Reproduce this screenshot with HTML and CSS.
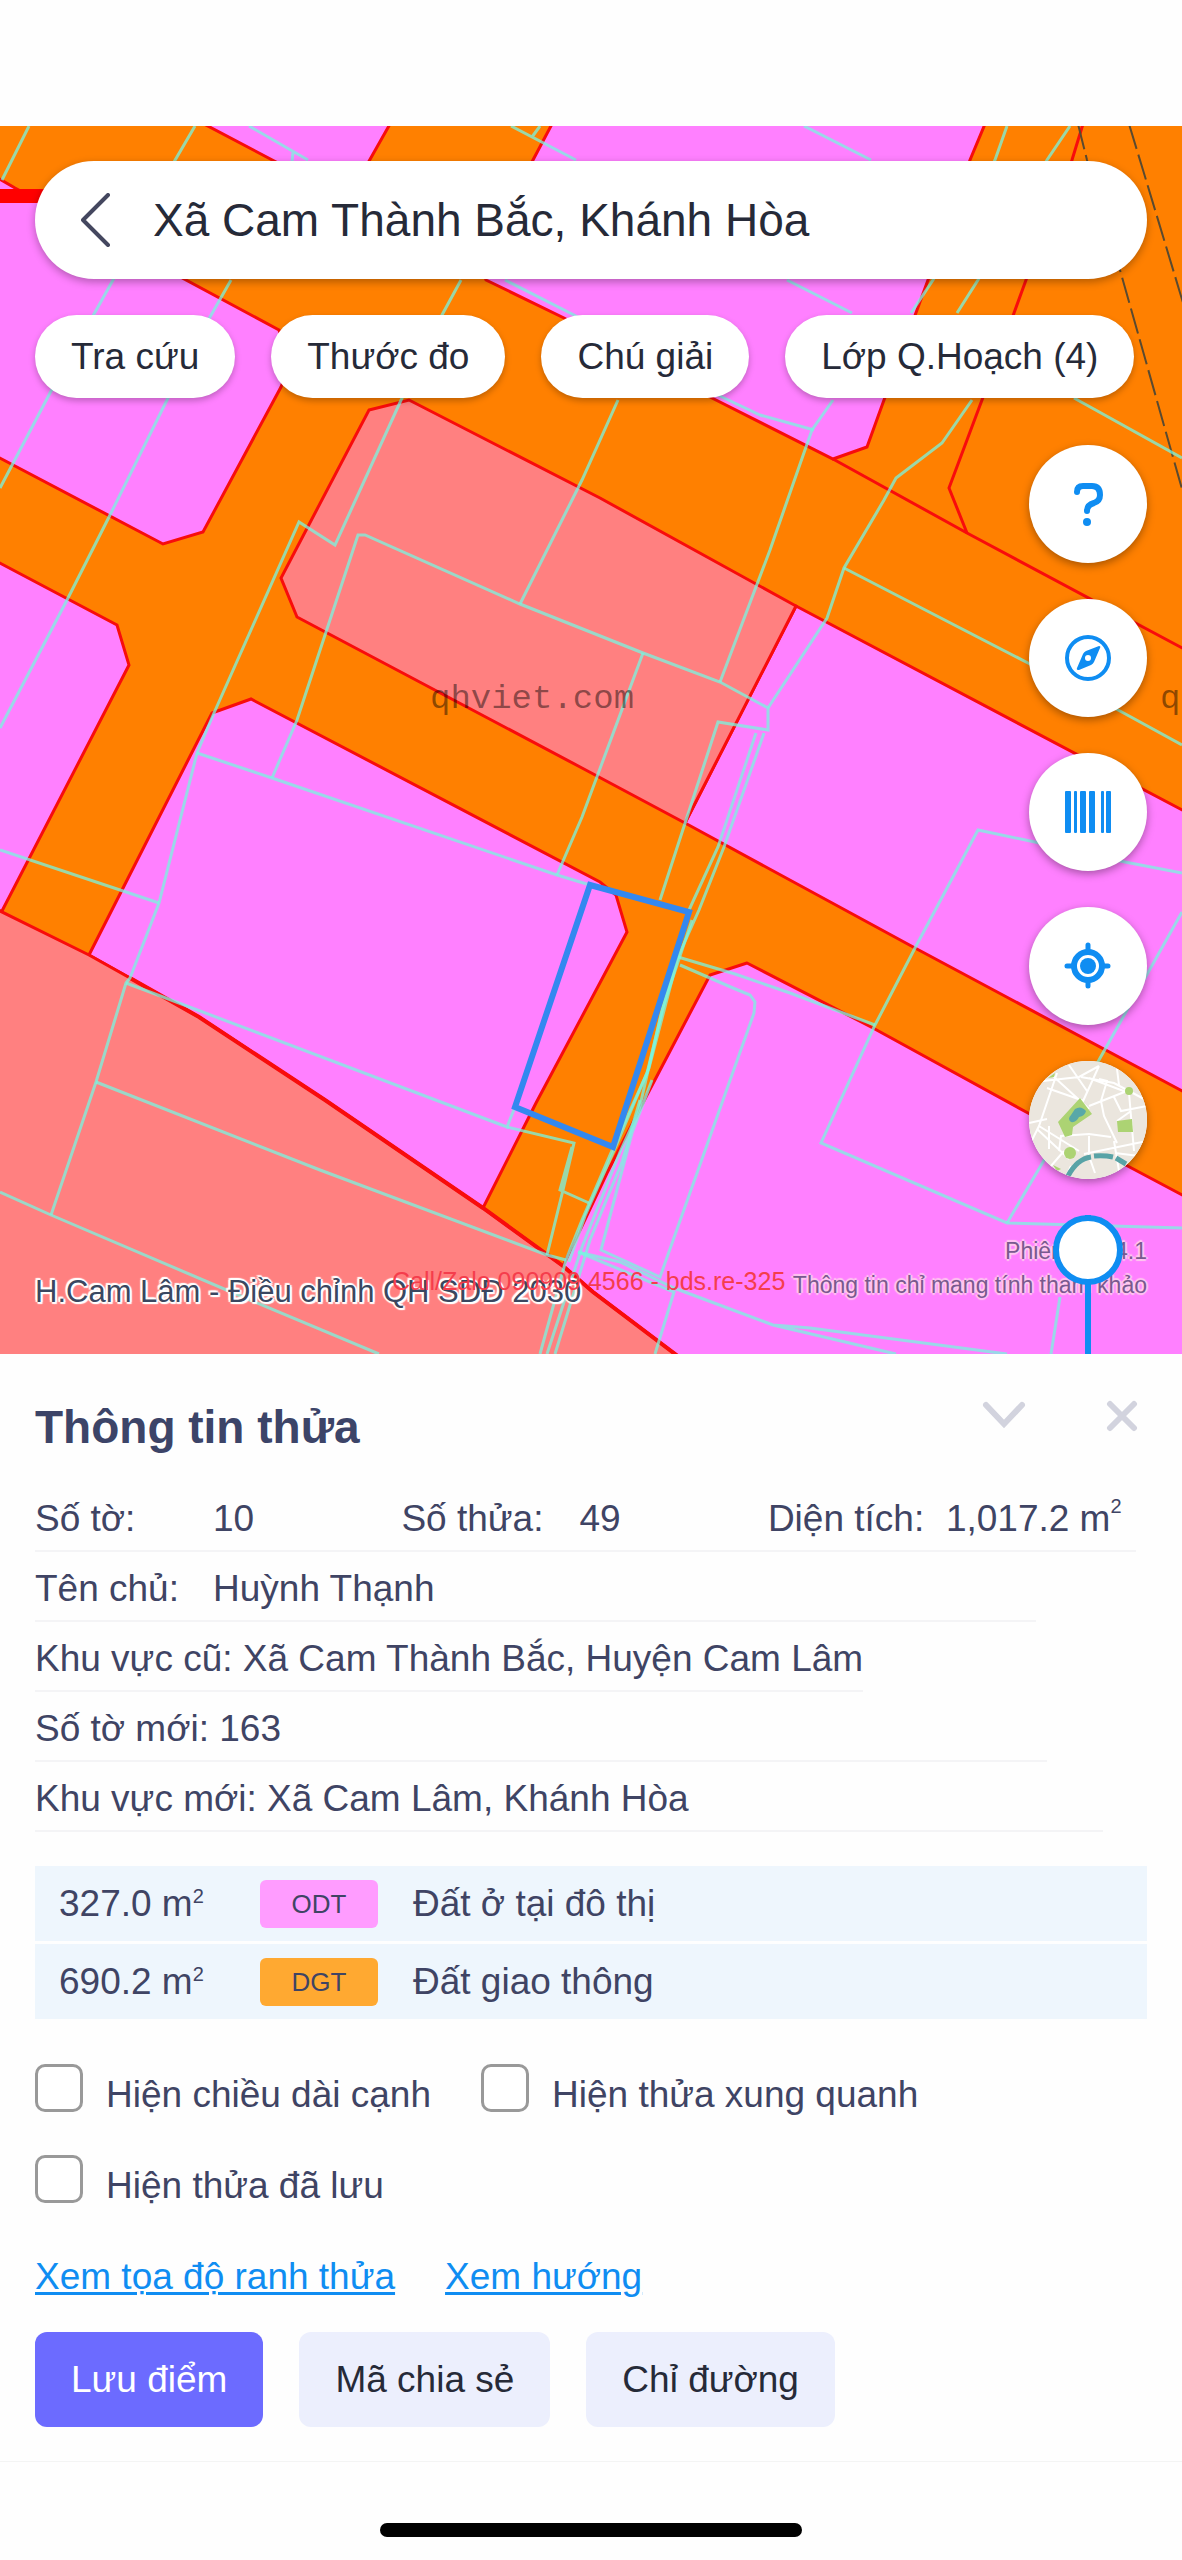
FILE: index.html
```html
<!DOCTYPE html>
<html lang="vi">
<head>
    <meta charset="UTF-8">
    <meta name="viewport" content="width=device-width, initial-scale=1.0">
    <title>Thông tin thửa</title>
    <link rel="stylesheet" href="styles.css">
</head>
<body>
    <main class="map">
        <svg class="map-canvas" viewBox="0 126 1182 1228" preserveAspectRatio="xMidYMid slice" aria-hidden="true">
            <rect class="road" x="0" y="126" width="1182" height="1228"/>

            <!-- planning zones -->
            <g class="zone odt">
                <path d="M-4 177 L15 188 L279 330 L290 364 L281 387 L203 532 L163 544 L-4 456Z"/>
                <path d="M204 124 L390 124 L355 186 L335 193Z"/>
                <path d="M552 124 L533 160 L480 262 L486 280 L564 318 L712 398 L833 459 L867 447 L884 400 L928 280 L970 160 L985 124Z"/>
                <path d="M796 606 L1186 812 L1186 1093 L915 948 L685 823Z"/>
                <path d="M-4 561 L117 625 L129 665 L2 911 L-4 911Z"/>
                <path d="M251 699 L212 713 L89 955 L130 978 L199 1017 L325 1100 L483 1208 L536 1103 L627 932 L616 895 L600 882Z"/>
                <path d="M747 963 L710 975 L647 1095 L607 1173 L563 1266 L593 1292 L679 1357 L1186 1357 L1186 1197 L1028 1113 L873 1028Z"/>
            </g>
            <g class="zone other">
                <path d="M369 410 L409 400 L600 498 L796 606 L685 823 L582 768 L297 617 L281 578Z"/>
                <path d="M-4 909 L89 955 L130 978 L199 1017 L325 1100 L483 1208 L563 1266 L593 1292 L679 1357 L-4 1357Z"/>
            </g>
            <rect class="red-bar" x="0" y="189" width="80" height="14"/>
            <g class="red-line">
                <path d="M833 459 L967 533 L1186 650"/>
                <path d="M1083 124 L1072 160 L1026 280 L1014 313 L982 400 L949 488 L967 533"/>
                <path class="bold" d="M130 978 L199 1017 L325 1100 L483 1208 L563 1266 L593 1292 L679 1357"/>
            </g>
            <g class="rail">
                <path d="M1078 124 L1087 160 L1120 270 L1182 489"/>
                <path d="M1129 124 L1143 170 L1184 306"/>
            </g>

            <!-- parcel boundaries -->
            <g class="parcel">
                <path d="M29 126 L2 180"/>
                <path d="M195 126 L174 162 L113 280 L50 393 L0 488"/>
                <path d="M231 280 L210 317 L167 400 L109 517 L67 600 L0 728"/>
                <path d="M249 126 L308 160 M293 152 L292 162"/>
                <path d="M511 126 L576 160 M540 126 L532 137"/>
                <path d="M804 126 L871 160"/>
                <path d="M461 280 L442 315 L402 398 L335 545 L299 522 L214 713 L197 753 L159 903 L130 978 L126 983 L96 1082 L51 1215"/>
                <path d="M505 280 L574 315 L722 397 L760 415 L814 430"/>
                <path d="M787 280 L852 313"/>
                <path d="M833 400 L812 430 L806 447 L770 550 L720 682"/>
                <path d="M618 400 L582 480 L520 604"/>
                <path d="M272 778 L297 720 L358 535 L365 535 L520 604 L643 653 L720 682 L768 708 L768 730 L718 722 L660 900"/>
                <path d="M197 753 L272 778 L557 875 L590 885"/>
                <path d="M643 653 L582 817 L557 875"/>
                <path d="M768 708 L827 618 L844 568 L884 500 L896 478 L942 443 L972 400"/>
                <path d="M957 313 L978 280 L1047 160 L1070 126"/>
                <path d="M911 313 L933 280 L995 160 L1007 126"/>
                <path d="M844 568 L1028 663 L1120 711 L1182 745"/>
                <path d="M1074 398 L1182 458"/>
                <path d="M756 733 L718 847 L689 910 L676 955 L647 1073 L613 1148 L582 1220 L566 1260 L540 1354"/>
                <path d="M764 733 L724 847 L699 910 L678 957 L649 1068 L616 1146 L585 1216 L569 1262"/>
                <path d="M692 920 L662 1010 L639 1110 L620 1152 L582 1247 L547 1354"/>
                <path d="M652 1080 L632 1133 L601 1250 L660 1277 L754 1013 L755 1002 L750 995 L733 988 L680 965"/>
                <path d="M640 1100 L622 1162 L590 1240 L555 1354"/>
                <path d="M678 957 L735 974 L790 993 L875 1025"/>
                <path d="M1182 873 L1125 862 L1035 842 L978 830 L915 948 L875 1025 L821 1143 L1007 1223 L1182 1228"/>
                <path d="M1182 912 L1099 1060 L1043 1162 L1007 1223"/>
                <path d="M578 1252 L620 1262 L674 1288 L773 1325 L896 1354 M773 1325 L810 1328 L1007 1354"/>
                <path d="M578 1252 L674 1292 L655 1354"/>
                <path d="M1060 1297 L1051 1354"/>
                <path d="M0 1192 L51 1215 L250 1300 L379 1354"/>
                <path d="M515 1107 L507 1127 L126 983"/>
                <path d="M507 1127 L574 1143 L563 1190 L547 1255 M572 1147 L560 1190 L589 1203"/>
                <path d="M96 1082 L320 1170 L547 1255 L566 1260"/>
                <path d="M0 850 L159 903"/>
            </g>

            <path class="selected" d="M590 885 L689 912 L613 1147 L515 1107Z"/>
            <text class="watermark" x="430" y="708">qhviet.com</text>
            <text class="watermark" x="1160" y="708">qhviet.com</text>
        </svg>

        <div class="search">
            <button class="back" aria-label="Quay lại">
                <svg width="30" height="54" viewBox="0 0 30 54"><path d="M27 2 L2 27 L27 52"/></svg>
            </button>
            <input type="text" value="Xã Cam Thành Bắc, Khánh Hòa" aria-label="Tìm khu vực">
        </div>

        <nav class="pills">
            <button>Tra cứu</button>
            <button>Thước đo</button>
            <button>Chú giải</button>
            <button>Lớp Q.Hoạch (4)</button>
        </nav>

        <div class="tools">
            <button aria-label="Trợ giúp">
                <svg class="line" width="48" height="48" viewBox="0 0 48 48">
                    <path stroke-width="6" d="M13 12 Q13 6 19 6 H28 Q36 6 36 15 Q36 21 30 23 Q23 25 23 31"/>
                    <circle class="fill" cx="23" cy="42" r="4"/>
                </svg>
            </button>
            <button aria-label="La bàn">
                <svg class="line" width="48" height="48" viewBox="0 0 48 48">
                    <circle cx="24" cy="24" r="21" stroke-width="4"/>
                    <path class="fill" fill-rule="evenodd" d="M35 12 Q37 12 36 14 L30 28 Q29 30 27 31 L15 36 Q12 36 13 34 L19 20 Q20 18 22 17Z M24 21 A3 3 0 1 0 24 27 A3 3 0 1 0 24 21Z"/>
                </svg>
            </button>
            <button aria-label="Mã vạch">
                <svg class="line" width="48" height="48" viewBox="0 0 48 48">
                    <g class="fill">
                        <rect x="1" y="3" width="6" height="42" rx="1"/>
                        <rect x="10" y="3" width="3" height="42" rx="1"/>
                        <rect x="16" y="3" width="6" height="42" rx="1"/>
                        <rect x="25" y="3" width="6" height="42" rx="1"/>
                        <rect x="37" y="3" width="3" height="42" rx="1"/>
                        <rect x="42" y="3" width="5" height="42" rx="1"/>
                    </g>
                </svg>
            </button>
            <button aria-label="Vị trí của tôi">
                <svg class="line" width="48" height="48" viewBox="0 0 48 48">
                    <circle cx="24" cy="24" r="14" stroke-width="6"/>
                    <circle class="fill" cx="24" cy="24" r="8"/>
                    <path stroke-width="5" d="M24 3 V9 M24 39 V44 M3 24 H9 M39 24 H44"/>
                </svg>
            </button>
            <button class="basemap" aria-label="Bản đồ nền">
                <svg width="118" height="118" viewBox="0 0 118 118">
                    <rect width="118" height="118" fill="#ebe6de"/>
                    <path class="street" d="M28 12 L10 65 L0 85 M14 20 L50 16 L70 5 M10 65 L50 90 M18 27 L55 40 M24 15 L60 48 M40 4 L58 30 M70 5 L45 60 M60 17 L100 32 L105 90 M52 16 L85 22 L115 38 M70 18 L78 20 L72 40 L75 55 L88 82 M60 45 L98 30 M85 36 L92 50 L118 45 M88 60 L102 50 M30 90 L32 75 L60 73 L82 76 M60 75 L60 95 L66 112 M55 93 L118 80 M85 80 L90 110 M20 88 L20 65 M0 62 L18 58 M8 68 L40 98 M22 105 L35 90 M86 92 L118 96 M88 8 L90 24 M42 105 L36 118"/>
                    <path fill="#acd373" d="M51 37 L63 53 L44 66 L43 74 L36 76 L29 61Z"/>
                    <path fill="#58a8a8" d="M46 48 Q52 44 57 50 Q56 55 50 56 Q47 62 42 61 Q38 58 42 54Z"/>
                    <path fill="#acd373" d="M88 60 L103 58 L104 71 L89 71Z"/>
                    <circle cx="41" cy="92" r="6" fill="#acd373"/>
                    <circle cx="100" cy="30" r="4" fill="#acd373"/>
                    <path fill="#acd373" d="M19 17 L26 12 L25 16Z M24 104 L32 108 L28 110Z"/>
                    <path fill="none" stroke="#58a3a6" stroke-width="5" d="M39 115 Q48 98 62 96 M65 95 Q75 94 84 96 M87 97 L97 103"/>
                </svg>
            </button>
            <input class="opacity" type="range" min="0" max="100" value="100" aria-label="Độ mờ lớp quy hoạch">
        </div>

        <p class="layer-name">H.Cam Lâm - Điều chỉnh QH SDĐ 2030</p>
        <p class="contact">Call/Zalo 090909 4566 - bds.re-325</p>
        <div class="notice">
            <p>Phiên bản 4.1</p>
            <p>Thông tin chỉ mang tính tham khảo</p>
        </div>
    </main>

    <section class="panel">
        <header class="panel-head">
            <h1>Thông tin thửa</h1>
            <button aria-label="Thu gọn">
                <svg width="44" height="32" viewBox="0 0 44 32"><path d="M4 5 L22 24 L40 5"/></svg>
            </button>
            <button aria-label="Đóng">
                <svg width="32" height="32" viewBox="0 0 32 32"><path d="M4 4 L28 28 M28 4 L4 28"/></svg>
            </button>
        </header>

        <div class="row row-parcel">
            <span>Số tờ:</span><span>10</span>
            <span>Số thửa:</span><span>49</span>
            <span>Diện tích:</span><span>1,017.2 m<sup>2</sup></span>
        </div>
        <div class="row row-owner"><span>Tên chủ:</span><span>Huỳnh Thạnh</span></div>
        <div class="row row-old">Khu vực cũ: Xã Cam Thành Bắc, Huyện Cam Lâm</div>
        <div class="row row-sheet">Số tờ mới: 163</div>
        <div class="row row-new">Khu vực mới: Xã Cam Lâm, Khánh Hòa</div>

        <table class="land">
            <tr>
                <td class="area">327.0 m<sup>2</sup></td>
                <td class="code"><span class="tag tag-odt">ODT</span></td>
                <td>Đất ở tại đô thị</td>
            </tr>
            <tr>
                <td class="area">690.2 m<sup>2</sup></td>
                <td class="code"><span class="tag tag-dgt">DGT</span></td>
                <td>Đất giao thông</td>
            </tr>
        </table>

        <div class="options">
            <label><input type="checkbox"> <span>Hiện chiều dài cạnh</span></label>
            <label><input type="checkbox"> <span>Hiện thửa xung quanh</span></label>
            <label><input type="checkbox"> <span>Hiện thửa đã lưu</span></label>
        </div>

        <div class="links">
            <a href="#toa-do">Xem tọa độ ranh thửa</a>
            <a href="#huong">Xem hướng</a>
        </div>

        <div class="actions">
            <button class="primary">Lưu điểm</button>
            <button>Mã chia sẻ</button>
            <button>Chỉ đường</button>
        </div>
    </section>

    <footer class="home"><div class="home-bar"></div></footer>
</body>
</html>
```
FILE: styles.css
```css
* { box-sizing: border-box; }
body {
    margin: 0;
    padding-top: 126px;
    background-color: #fefefe;
    color: #3f4464;
    font-family: "Liberation Sans", Arial, Helvetica, sans-serif;
    font-size: 37px;
}
button, input { font: inherit; color: inherit; }
button {
    border: none;
    background: none;
    padding: 0;
    cursor: pointer;
}
p, h1 { margin: 0; }

/* Map */
.map {
    position: relative;
    overflow: hidden;
    padding: 35px 35px 0;
    color: #262a38;
}
.map-canvas {
    position: absolute;
    top: 0;
    left: 0;
    width: 100%;
    height: 100%;
}
.road { fill: #ff8000; }
.zone path { stroke: #f80c0c; stroke-width: 3; }
.odt path { fill: #ff80ff; }
.other path { fill: #ff8080; }
.red-bar { fill: #ff0000; }
.red-line path { fill: none; stroke: #f80c0c; stroke-width: 3; }
.red-line .bold { stroke-width: 4; }
.rail path { fill: none; stroke: #5a4a30; stroke-width: 2; stroke-dasharray: 26 6; }
.parcel path {
    fill: none;
    stroke: #78f5e0;
    stroke-opacity: 0.75;
    stroke-width: 3;
}
.selected { fill: none; stroke: #3388f0; stroke-width: 6; }
.watermark {
    font-family: "Liberation Mono", monospace;
    font-size: 34px;
    fill: #000;
    fill-opacity: 0.45;
}

.search {
    position: relative;
    display: flex;
    align-items: center;
    gap: 42px;
    height: 118px;
    padding: 0 46px;
    border-radius: 59px;
    background-color: #fff;
    box-shadow: 0 3px 8px rgba(0, 0, 0, 0.3);
}
.back { display: flex; }
.back path {
    fill: none;
    stroke: #44475f;
    stroke-width: 4;
    stroke-linecap: round;
    stroke-linejoin: round;
}
.search input {
    flex: 1;
    min-width: 0;
    border: none;
    padding: 0;
    background: none;
    font-size: 46px;
    outline: none;
}
.pills {
    position: relative;
    display: flex;
    gap: 36px;
    margin-top: 36px;
}
.pills button {
    height: 83px;
    padding: 0 36px;
    border-radius: 42px;
    background-color: #fff;
    white-space: nowrap;
    box-shadow: 0 3px 6px rgba(0, 0, 0, 0.25);
}
.tools {
    position: relative;
    display: flex;
    flex-direction: column;
    align-items: flex-end;
    gap: 36px;
    margin-top: 47px;
    z-index: 2;
}
.tools button {
    display: flex;
    align-items: center;
    justify-content: center;
    width: 118px;
    height: 118px;
    border-radius: 50%;
    background-color: #fff;
    box-shadow: 0 3px 8px rgba(0, 0, 0, 0.35);
    overflow: hidden;
}
.line { fill: none; stroke: #0f8df2; stroke-linecap: round; }
.line .fill { fill: #0f8df2; stroke: none; }
.street { fill: none; stroke: #fff; stroke-width: 2; }

/* vertical slider, runs down under the panel */
.opacity {
    appearance: none;
    writing-mode: vertical-lr;
    direction: rtl;
    width: 118px;
    height: 139px;
    margin: 0;
    background: none;
}
.opacity::-webkit-slider-runnable-track {
    width: 6px;
    background-color: #0f8df2;
}
.opacity::-webkit-slider-thumb {
    appearance: none;
    width: 70px;
    height: 70px;
    margin-left: -32px;
    border: 6px solid #0f8df2;
    border-radius: 50%;
    background-color: #fff;
}

.layer-name, .contact, .notice { position: absolute; white-space: nowrap; }
.layer-name {
    left: 35px;
    bottom: 44px;
    font-size: 31px;
    line-height: 36px;
    color: #3a4760;
    text-shadow: 2px 0 1px #fff, -2px 0 1px #fff, 0 2px 1px #fff, 0 -2px 1px #fff, 2px 2px 1px #fff, -2px -2px 1px #fff;
}
.contact {
    left: 392px;
    bottom: 58px;
    font-size: 25px;
    line-height: 30px;
    color: #f53d4c;
}
.notice {
    right: 35px;
    bottom: 52px;
    font-size: 23px;
    line-height: 34px;
    text-align: right;
    color: #79598f;
    text-shadow: 2px 0 1px #fce, -2px 0 1px #fce, 0 2px 1px #fce, 0 -2px 1px #fce;
}

/* Parcel panel */
.panel {
    padding: 42px 35px 34px;
    border-bottom: 1px solid #f4f4f4;
}
.panel-head {
    display: flex;
    align-items: flex-start;
    gap: 80px;
    height: 86px;
    padding-right: 9px;
}
.panel-head h1 {
    flex: 1;
    font-size: 46px;
    line-height: 62px;
    color: #3c4468;
}
.panel-head button { display: flex; padding-top: 4px; }
.panel-head path {
    fill: none;
    stroke: #d2d3de;
    stroke-width: 6;
    stroke-linecap: round;
}
.row {
    display: flex;
    height: 70px;
    line-height: 74px;
    border-bottom: 2px solid #f4f4f6;
    white-space: nowrap;
}
.row span { width: 178px; }
.row sup, .land sup {
    font-size: 20px;
    line-height: 0;
}
.row sup { vertical-align: 18px; }
.land sup { vertical-align: 13px; }
.row-parcel { width: 99%; display: grid; grid-template-columns: 178px 1fr 178px 1fr 178px 190px; }
.row-owner { width: 90%; }
.row-old { width: fit-content; }
.row-sheet { width: 91%; }
.row-new { width: 96%; }

.land {
    width: 100%;
    margin-top: 31px;
    border-collapse: separate;
    border-spacing: 0 3px;
}
.land td {
    height: 75px;
    padding: 0;
    background-color: #eef6fd;
}
.land .area { width: 225px; padding-left: 24px; }
.land .code { width: 153px; }
.tag {
    display: block;
    width: 118px;
    height: 48px;
    border-radius: 6px;
    font-size: 26px;
    line-height: 48px;
    text-align: center;
}
.tag-odt { background-color: #ff9cff; }
.tag-dgt { background-color: #ffa931; }

.options {
    display: flex;
    flex-wrap: wrap;
    gap: 27px 50px;
    margin-top: 42px;
}
.options label {
    display: flex;
    gap: 23px;
    line-height: 62px;
    height: 64px;
}
.options input {
    appearance: none;
    width: 48px;
    height: 48px;
    margin: 0;
    border: 3px solid #999;
    border-radius: 10px;
    background-color: #fff;
}
.links {
    display: flex;
    gap: 50px;
    margin-top: 35px;
    line-height: 46px;
}
.links a {
    color: #0f8df2;
    text-decoration-thickness: 3px;
    text-underline-offset: 3px;
}
.actions {
    display: flex;
    gap: 36px;
    margin-top: 32px;
}
.actions button {
    height: 95px;
    padding: 0 36px;
    border-radius: 12px;
    background-color: #eceffd;
    color: #262a38;
}
.actions .primary { background-color: #6c6bff; color: #fff; }

.home { padding: 61px 0 23px; }
.home-bar {
    width: 422px;
    height: 14px;
    margin: 0 auto;
    border-radius: 7px;
    background-color: #000;
}
```
